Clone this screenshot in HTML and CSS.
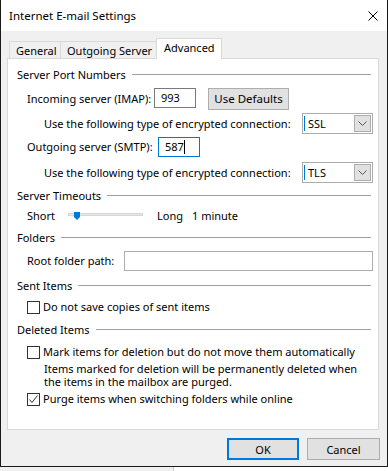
FILE: index.html
```html
<!DOCTYPE html>
<html lang="en">
<head>
    <meta charset="UTF-8">
    <meta name="viewport" content="width=device-width, initial-scale=1.0">
    <title>Internet E-mail Settings</title>
    <link rel="stylesheet" href="styles.css">
</head>
<body>
    <div class="window">
        <div class="titlebar">
            <span>Internet E-mail Settings</span>
            <svg class="close" width="10" height="10" viewBox="0 0 10 10">
                <path d="M0.5 0.5 L9.5 9.5 M9.5 0.5 L0.5 9.5" stroke="#000" stroke-width="1" fill="none"/>
            </svg>
        </div>
        <div class="content">
            <div class="tabs">
                <div class="tab tab-general">General</div>
                <div class="tab tab-outgoing">Outgoing Server</div>
                <div class="tab tab-advanced active">Advanced</div>
            </div>
            <div class="panel">
                <div class="group-title first"><span>Server Port Numbers</span></div>
                <div class="row row-imap">
                    <span class="label label-imap">Incoming server (IMAP):</span>
                    <div class="textbox port hover">993</div>
                    <button class="btn defaults">Use Defaults</button>
                </div>
                <div class="row sub row-ssl">
                    <span>Use the following type of encrypted connection:</span>
                    <div class="combo"><span class="combo-text">SSL</span><span class="drop"><svg width="9" height="5" viewBox="0 0 9 5"><path d="M0.5 0.5 L4.5 4.5 L8.5 0.5" stroke="#555" fill="none"/></svg></span></div>
                </div>
                <div class="row row-smtp">
                    <span class="label label-smtp">Outgoing server (SMTP):</span>
                    <div class="textbox port focus">587<span class="caret"></span></div>
                </div>
                <div class="row sub row-tls">
                    <span>Use the following type of encrypted connection:</span>
                    <div class="combo"><span class="combo-text">TLS</span><span class="drop"><svg width="9" height="5" viewBox="0 0 9 5"><path d="M0.5 0.5 L4.5 4.5 L8.5 0.5" stroke="#555" fill="none"/></svg></span></div>
                </div>

                <div class="group-title timeouts"><span>Server Timeouts</span></div>
                <div class="row row-slider">
                    <span class="label label-short">Short</span>
                    <div class="slider">
                        <div class="track"></div>
                        <svg class="thumb" width="6" height="8" viewBox="0 0 6 8"><polygon points="0,0 6,0 6,5 3,8 0,5" fill="#0078d7"/></svg>
                    </div>
                    <span class="label-long">Long</span>
                    <span>1 minute</span>
                </div>

                <div class="group-title folders"><span>Folders</span></div>
                <div class="row row-root">
                    <span class="label label-root">Root folder path:</span>
                    <div class="textbox path"></div>
                </div>

                <div class="group-title sent"><span>Sent Items</span></div>
                <label class="check row-sent">
                    <span class="box"></span>
                    <span>Do not save copies of sent items</span>
                </label>

                <div class="group-title deleted"><span>Deleted Items</span></div>
                <label class="check row-mark">
                    <span class="box"></span>
                    <span>Mark items for deletion but do not move them automatically</span>
                </label>
                <p class="note">Items marked for deletion will be permanently deleted when<br>the items in the mailbox are purged.</p>
                <label class="check row-purge">
                    <span class="box checked"><svg width="11" height="11" viewBox="0 0 11 11"><path d="M1.5 5.5 L4 8.5 L9.5 1.5" stroke="#333" stroke-width="1" fill="none"/></svg></span>
                    <span>Purge items when switching folders while online</span>
                </label>
            </div>
            <div class="footer">
                <button class="btn ok">OK</button>
                <button class="btn cancel">Cancel</button>
            </div>
        </div>
    </div>
    <div class="backdrop"></div>
</body>
</html>
```

FILE: styles.css
```css
body {
    margin: 0;
    background-color: #fff;
    color: #000;
    font-family: 'Noto Sans', sans-serif;
    font-size: 11px;
    line-height: 16px;
}

.window {
    width: 386px;
    height: 466px;
    border: 1px solid #1a1a1a;
    border-top: none;
    background-color: #f0f0f0;
    display: flex;
    flex-direction: column;
}

.titlebar {
    height: 31px;
    flex-shrink: 0;
    background-color: #fff;
    display: flex;
    align-items: center;
    justify-content: space-between;
    padding: 0 9px 0 8px;
    font-size: 11.5px;
}

.close {
    display: block;
}

.content {
    padding: 7px 8px 0 6px;
}

/* tabs */
.tabs {
    display: flex;
    align-items: flex-end;
    height: 20px;
    padding-left: 2px;
}

.tab {
    height: 17px;
    box-sizing: border-box;
    border: 1px solid #d9d9d9;
    border-bottom: none;
    border-right: none;
    padding-left: 6px;
    line-height: 17px;
    white-space: nowrap;
}

.tab-general {
    width: 51px;
}

.tab-outgoing {
    width: 96px;
}

.tab.active {
    width: 66px;
    height: 21px;
    margin-bottom: -1px;
    position: relative;
    z-index: 1;
    background-color: #fff;
    border-right: 1px solid #d9d9d9;
    padding-left: 7px;
    line-height: 18px;
}

.panel {
    height: 372px;
    box-sizing: border-box;
    border: 1px solid #d9d9d9;
    background-color: #fff;
    padding: 8px 6px 0 9px;
}

/* group headings */
.group-title {
    display: flex;
    align-items: center;
    height: 16px;
    margin-right: 1px;
}

.group-title::after {
    content: "";
    flex: 1;
    height: 1px;
    background-color: #a0a0a0;
    margin-left: 6px;
    margin-top: -2px;
}

.group-title.timeouts { margin-top: 5px; }
.group-title.folders { margin-top: 6px; }
.group-title.sent { margin-top: 7px; }
.group-title.deleted { margin-top: 7px; }

/* rows */
.row {
    display: flex;
    align-items: center;
    height: 21px;
    padding-left: 10px;
    white-space: nowrap;
}

.row.sub {
    padding-left: 27px;
    justify-content: space-between;
    margin-right: -1px;
}

.row-imap { margin-top: 5px; }
.row-ssl { margin-top: 4px; }
.row-smtp { margin-top: 3px; align-items: flex-start; }
.row-tls { margin-top: 4px; }

.label-imap { width: 127px; }
.label-smtp { width: 131px; line-height: 20px; }

.textbox {
    box-sizing: border-box;
    height: 20px;
    background-color: #fff;
    border: 1px solid #adadad;
    line-height: 18px;
    flex-shrink: 0;
}

.textbox.port {
    width: 42px;
    padding-left: 6px;
}

.textbox.hover {
    border-color: #7a7a7a;
    align-self: flex-start;
}

.textbox.focus {
    border-color: #0078d7;
}

.caret {
    display: inline-block;
    width: 1px;
    height: 14px;
    background-color: #000;
    vertical-align: -3px;
}

.btn {
    box-sizing: border-box;
    height: 22px;
    font-family: inherit;
    font-size: 11px;
    color: #000;
    background-color: #e1e1e1;
    border: 1px solid #adadad;
    padding: 0;
}

.defaults {
    width: 81px;
    margin-left: 12px;
    font-size: 11.5px;
}

.combo {
    box-sizing: border-box;
    width: 71px;
    height: 21px;
    border: 1px solid #adadad;
    background-color: #fff;
    display: flex;
    align-items: center;
    padding: 1px;
    flex-shrink: 0;
}

.combo-text {
    flex: 1;
    border-left: 1px solid #0078d7;
    padding-left: 3px;
    line-height: 15px;
}

.drop {
    box-sizing: border-box;
    width: 17px;
    height: 17px;
    background-color: #e1e1e1;
    border: 1px solid #adadad;
    display: flex;
    align-items: center;
    justify-content: center;
}

/* timeout slider */
.row-slider {
    height: 16px;
    margin-top: 4px;
}

.label-short {
    width: 41px;
}

.slider {
    position: relative;
    width: 75px;
    height: 16px;
}

.track {
    position: absolute;
    left: 0;
    right: 0;
    top: 5px;
    height: 3px;
    background-color: #e7e7e7;
    border: 1px solid #d6d6d6;
    box-sizing: border-box;
}

.thumb {
    position: absolute;
    left: 6px;
    top: 4px;
}

.label-long {
    margin-left: 14px;
    width: 35px;
}

/* folders */
.row-root {
    height: 20px;
    margin-top: 5px;
}

.label-root {
    width: 97px;
}

.textbox.path {
    flex: 1;
    margin-right: -1px;
}

/* checkboxes */
.check {
    display: flex;
    align-items: center;
    height: 16px;
    padding-left: 10px;
    white-space: nowrap;
}

.box {
    box-sizing: border-box;
    flex-shrink: 0;
    width: 13px;
    height: 13px;
    border: 1px solid #333;
    background-color: #fff;
    margin-right: 3px;
    display: flex;
    align-items: center;
    justify-content: center;
}

.row-sent { margin-top: 5px; }
.row-mark { margin-top: 6px; }
.row-purge { margin-top: 3px; }

.note {
    margin: 2px 0 0 27px;
    line-height: 13px;
    white-space: nowrap;
}

.footer {
    display: flex;
    justify-content: flex-end;
    gap: 8px;
    margin-top: 8px;
    margin-right: -1px;
}

.ok {
    width: 72px;
    border: 2px solid #0078d7;
}

.cancel {
    width: 73px;
}

.backdrop {
    height: 4px;
    width: 173px;
    background-color: #f0f0f0;
    border-right: 1px solid #c8c8c8;
}
```
